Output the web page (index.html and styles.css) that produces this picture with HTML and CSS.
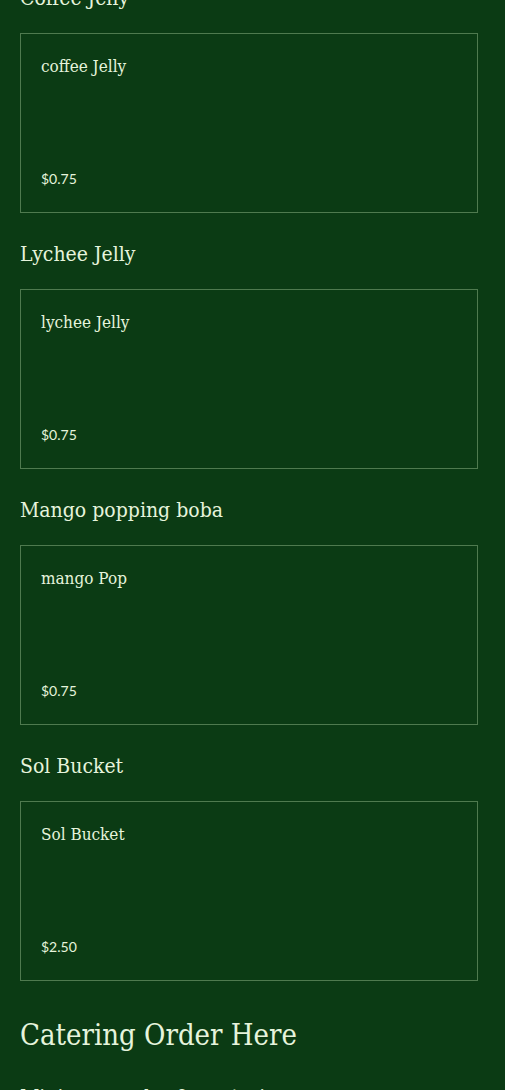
FILE: index.html
```html
<!DOCTYPE html>
<html>
<head>
    <title>Menu - Toppings</title>
    <link rel="stylesheet" href="styles.css">
</head>
<body>
    <div class="menu">
        <section class="category first">
            <h2>Coffee Jelly</h2>
            <div class="item">
                <h3>coffee Jelly</h3>
                <span class="price">$0.75</span>
            </div>
        </section>

        <section class="category">
            <h2>Lychee Jelly</h2>
            <div class="item">
                <h3>lychee Jelly</h3>
                <span class="price">$0.75</span>
            </div>
        </section>

        <section class="category">
            <h2>Mango popping boba</h2>
            <div class="item">
                <h3>mango Pop</h3>
                <span class="price">$0.75</span>
            </div>
        </section>

        <section class="category">
            <h2>Sol Bucket</h2>
            <div class="item">
                <h3>Sol Bucket</h3>
                <span class="price">$2.50</span>
            </div>
        </section>

        <section class="catering">
            <h1>Catering Order Here</h1>
            <p class="catering-note">Minimum order for catering</p>
        </section>
    </div>
</body>
</html>
```

FILE: styles.css
```css
body {
    margin: 0;
    background-color: #0b3b14;
    color: #e6f4dc;
    font-family: "DejaVu Serif Condensed", "DejaVu Serif", serif;
}
.menu {
    padding: 0 27px 40px 20px;
}
.category {
    margin-top: 27px;
}
.category.first {
    margin-top: -16px;
}
.category h2 {
    margin: 0 0 21px;
    font-size: 21px;
    line-height: 28px;
    font-weight: normal;
}
.item {
    border: 1px solid #4f7a4f;
    padding: 20px;
    min-height: 138px;
    display: flex;
    flex-direction: column;
    justify-content: space-between;
}
.item h3 {
    margin: 0;
    font-size: 17px;
    line-height: 24px;
    font-weight: normal;
}
.price {
    font-family: Lato, sans-serif;
    font-size: 14px;
    line-height: 20px;
    margin-bottom: 3px;
}
.catering {
    margin-top: 36px;
}
.catering h1 {
    margin: 0 0 30px;
    font-size: 29px;
    line-height: 36px;
    font-weight: normal;
}
.catering-note {
    margin: 0;
    font-size: 21px;
    line-height: 28px;
}
```
